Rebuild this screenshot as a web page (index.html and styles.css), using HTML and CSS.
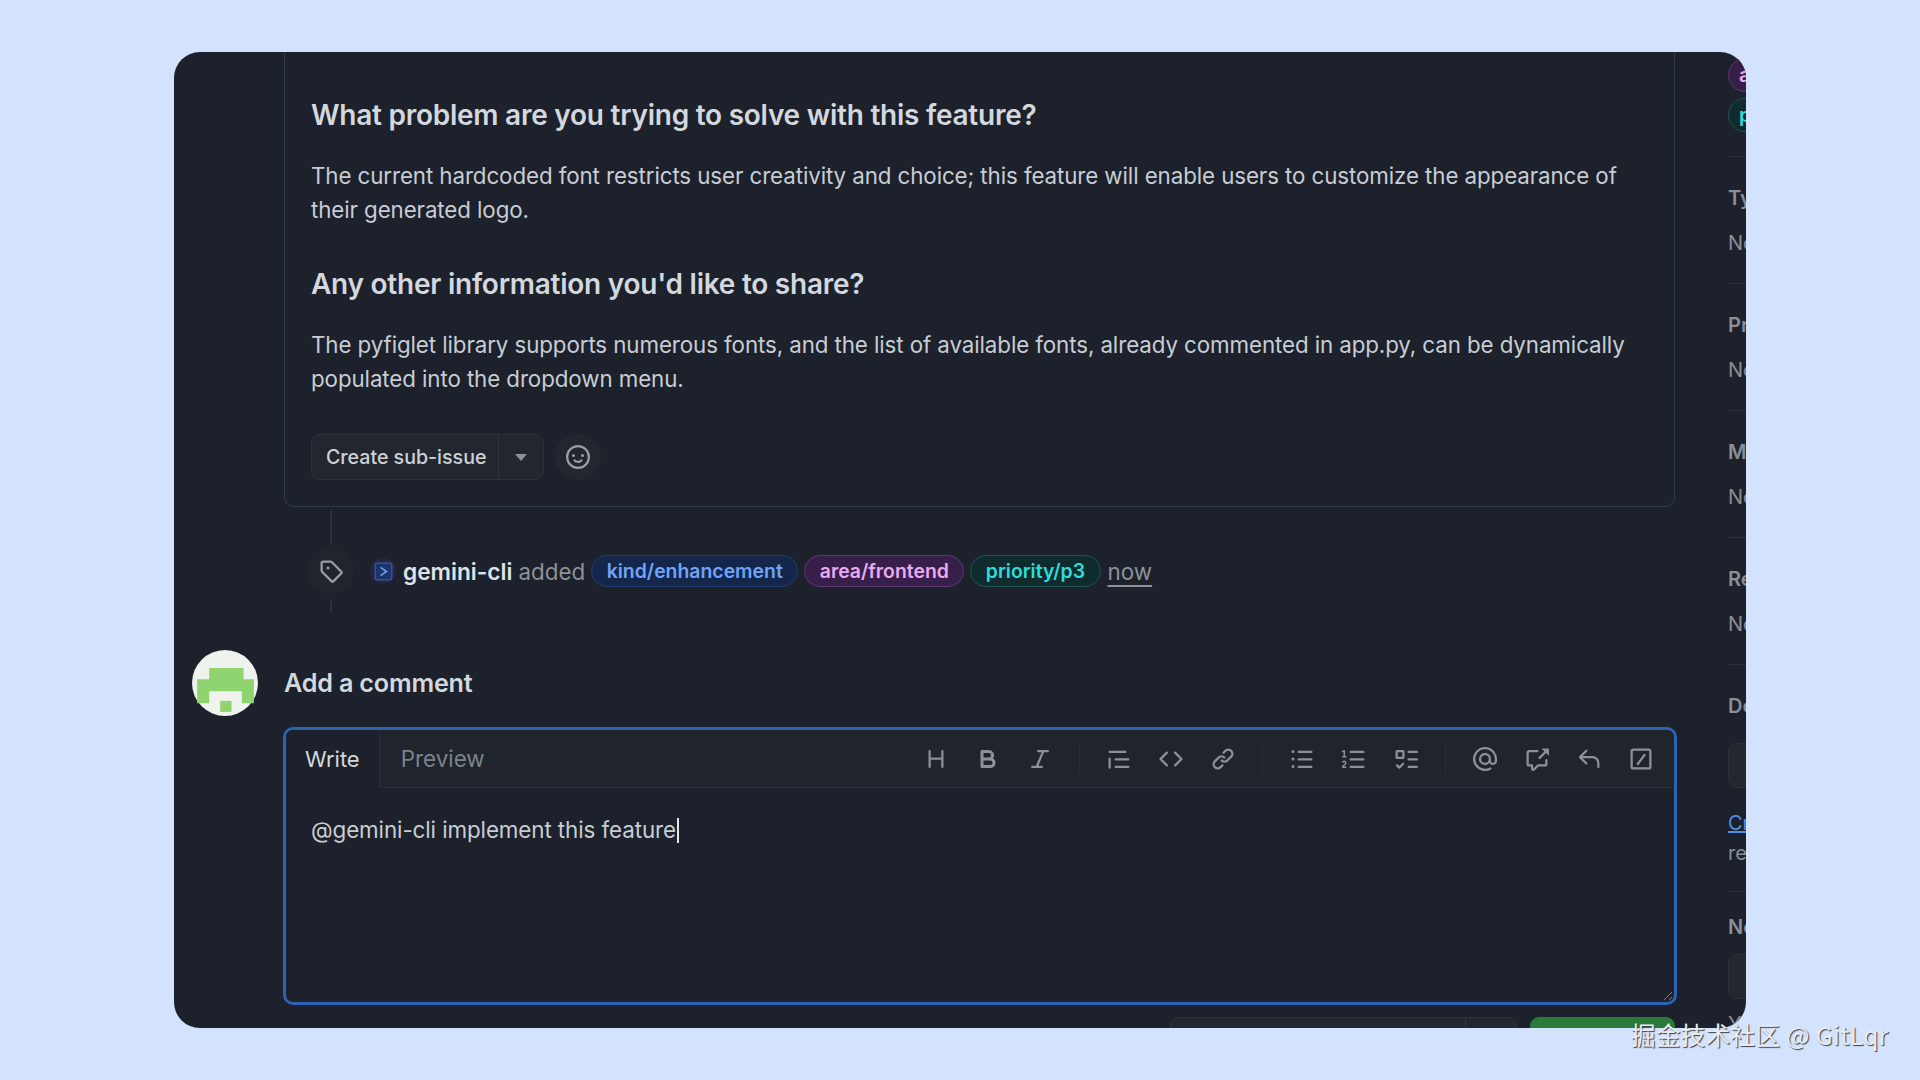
FILE: index.html
```html
<!DOCTYPE html>
<html lang="en">
<head>
<meta charset="utf-8">
<title>Add a comment</title>
<link rel="stylesheet" href="styles.css">
</head>
<body>
<div class="window">
  <main class="main">
    <section class="card">
      <h3 class="h first">What problem are you trying to solve with this feature?</h3>
      <p class="para">The current hardcoded font restricts user creativity and choice; this feature will enable users to customize the appearance of their generated logo.</p>
      <h3 class="h second">Any other information you'd like to share?</h3>
      <p class="para">The pyfiglet library supports numerous fonts, and the list of available fonts, already commented in app.py, can be dynamically populated into the dropdown menu.</p>
      <div class="actions">
        <div class="split">
          <span class="split-main">Create sub-issue</span>
          <span class="split-caret"><i class="caret"></i></span>
        </div>
        <span class="react">
          <svg class="ico" viewBox="0 0 16 16"><path d="M8 0a8 8 0 1 1 0 16A8 8 0 0 1 8 0ZM1.5 8a6.5 6.5 0 1 0 13 0 6.5 6.5 0 0 0-13 0Zm3.82 1.636a.75.75 0 0 1 1.038.175l.007.009c.103.118.22.222.35.31.264.178.683.37 1.285.37.602 0 1.02-.192 1.285-.371.13-.088.247-.192.35-.31l.007-.008a.75.75 0 0 1 1.222.87l-.022-.015c.02.013.021.015.021.015v.001l-.001.002-.002.003-.005.007-.014.019a2.066 2.066 0 0 1-.184.213c-.16.166-.338.316-.53.445-.63.418-1.37.638-2.127.629-.946 0-1.652-.308-2.126-.63a3.331 3.331 0 0 1-.715-.657l-.014-.02-.005-.006-.002-.003v-.002h-.001l.613-.432-.614.43a.75.75 0 0 1 .183-1.044ZM12 7a1 1 0 1 1-2 0 1 1 0 0 1 2 0ZM5 8a1 1 0 1 1 0-2 1 1 0 0 1 0 2Z"/></svg>
        </span>
      </div>
    </section>

    <div class="tl-line tl-top"></div>
    <div class="event">
      <span class="tag-ico">
        <svg class="ico" viewBox="0 0 16 16"><path d="M1 7.775V2.75C1 1.784 1.784 1 2.75 1h5.025c.464 0 .91.184 1.238.513l6.25 6.25a1.75 1.75 0 0 1 0 2.474l-5.026 5.026a1.75 1.75 0 0 1-2.474 0l-6.25-6.25A1.752 1.752 0 0 1 1 7.775Zm1.5 0c0 .066.026.13.073.177l6.25 6.25a.25.25 0 0 0 .354 0l5.025-5.025a.25.25 0 0 0 0-.354l-6.25-6.25a.25.25 0 0 0-.177-.073H2.75a.25.25 0 0 0-.25.25ZM6 5a1 1 0 1 1 0 2 1 1 0 0 1 0-2Z"/></svg>
      </span>
      <span class="bot"><svg class="bot-ico" viewBox="0 0 16 16"><rect x="1" y="1" width="14" height="14" rx="2" class="bot-bg"/><path d="M5.5 4.5 10.5 8l-5 3.5" class="bot-chev"/></svg></span>
      <strong class="who">gemini-cli</strong>
      <span class="muted">added</span>
      <span class="pill kind">kind/enhancement</span>
      <span class="pill area">area/frontend</span>
      <span class="pill prio">priority/p3</span>
      <span class="muted now">now</span>
    </div>
    <div class="tl-line tl-bottom"></div>

    <div class="comment-head">
      <span class="avatar">
        <svg class="avatar-art" viewBox="0 0 192 192"><path class="avatar-px" d="M50 52h100v33h30v70h-35v-35H50v35H15V85h35Z"/><rect class="avatar-px" x="82" y="148" width="33" height="32"/></svg>
      </span>
      <h2 class="add">Add a comment</h2>
    </div>

    <div class="editor">
      <div class="toolbar">
        <span class="tab active">Write</span>
        <span class="tab">Preview</span>
        <div class="tools">
          <svg class="tool" viewBox="0 0 16 16"><path d="M3.75 2a.75.75 0 0 1 .75.75V7h7V2.75a.75.75 0 0 1 1.5 0v10.5a.75.75 0 0 1-1.5 0V8.5h-7v4.75a.75.75 0 0 1-1.5 0V2.75A.75.75 0 0 1 3.75 2Z"/></svg>
          <svg class="tool" viewBox="0 0 16 16"><path d="M4 2h4.5a3.501 3.501 0 0 1 2.852 5.53A3.499 3.499 0 0 1 9.5 14H4a1 1 0 0 1-1-1V3a1 1 0 0 1 1-1Zm1 7v3h4.5a1.5 1.5 0 0 0 0-3Zm3.5-2a1.5 1.5 0 0 0 0-3H5v3Z"/></svg>
          <svg class="tool" viewBox="0 0 16 16"><path d="M6 2.75A.75.75 0 0 1 6.75 2h6.5a.75.75 0 0 1 0 1.5h-2.505l-3.858 9H9.25a.75.75 0 0 1 0 1.5h-6.5a.75.75 0 0 1 0-1.5h2.505l3.858-9H6.75A.75.75 0 0 1 6 2.75Z"/></svg>
          <i class="sep"></i>
          <svg class="tool" viewBox="0 0 16 16"><path d="M1.75 2.5h10.5a.75.75 0 0 1 0 1.5H1.75a.75.75 0 0 1 0-1.5Zm4 5h8.5a.75.75 0 0 1 0 1.5h-8.5a.75.75 0 0 1 0-1.5Zm0 5h8.5a.75.75 0 0 1 0 1.5h-8.5a.75.75 0 0 1 0-1.5ZM2.5 7.75v6a.75.75 0 0 1-1.5 0v-6a.75.75 0 0 1 1.5 0Z"/></svg>
          <svg class="tool" viewBox="0 0 16 16"><path d="m11.28 3.22 4.25 4.25a.75.75 0 0 1 0 1.06l-4.25 4.25a.749.749 0 0 1-1.275-.326.749.749 0 0 1 .215-.734L13.94 8l-3.72-3.72a.749.749 0 0 1 .326-1.275.749.749 0 0 1 .734.215Zm-6.56 0a.751.751 0 0 1 1.042.018.751.751 0 0 1 .018 1.042L2.06 8l3.72 3.72a.749.749 0 0 1-.326 1.275.749.749 0 0 1-.734-.215L.47 8.53a.75.75 0 0 1 0-1.06Z"/></svg>
          <svg class="tool" viewBox="0 0 16 16"><path d="m7.775 3.275 1.25-1.25a3.5 3.5 0 1 1 4.95 4.95l-2.5 2.5a3.5 3.5 0 0 1-4.95 0 .751.751 0 0 1 .018-1.042.751.751 0 0 1 1.042-.018 1.998 1.998 0 0 0 2.83 0l2.5-2.5a2.002 2.002 0 0 0-2.83-2.83l-1.25 1.25a.751.751 0 0 1-1.042-.018.751.751 0 0 1-.018-1.042Zm-4.69 9.64a1.998 1.998 0 0 0 2.83 0l1.25-1.25a.751.751 0 0 1 1.042.018.751.751 0 0 1 .018 1.042l-1.25 1.25a3.5 3.5 0 1 1-4.95-4.95l2.5-2.5a3.5 3.5 0 0 1 4.95 0 .751.751 0 0 1-.018 1.042.751.751 0 0 1-1.042.018 1.998 1.998 0 0 0-2.83 0l-2.5 2.5a1.998 1.998 0 0 0 0 2.83Z"/></svg>
          <i class="sep"></i>
          <svg class="tool" viewBox="0 0 16 16"><path d="M5.75 2.5h8.5a.75.75 0 0 1 0 1.5h-8.5a.75.75 0 0 1 0-1.5Zm0 5h8.5a.75.75 0 0 1 0 1.5h-8.5a.75.75 0 0 1 0-1.5Zm0 5h8.5a.75.75 0 0 1 0 1.5h-8.5a.75.75 0 0 1 0-1.5ZM2 14a1 1 0 1 1 0-2 1 1 0 0 1 0 2Zm1-6a1 1 0 1 1-2 0 1 1 0 0 1 2 0ZM2 4a1 1 0 1 1 0-2 1 1 0 0 1 0 2Z"/></svg>
          <svg class="tool" viewBox="0 0 16 16"><path d="M5 3.25a.75.75 0 0 1 .75-.75h8.5a.75.75 0 0 1 0 1.5h-8.5A.75.75 0 0 1 5 3.25Zm0 5a.75.75 0 0 1 .75-.75h8.5a.75.75 0 0 1 0 1.5h-8.5A.75.75 0 0 1 5 8.25Zm0 5a.75.75 0 0 1 .75-.75h8.5a.75.75 0 0 1 0 1.5h-8.5a.75.75 0 0 1-.75-.75ZM.924 10.32a.5.5 0 0 1-.851-.525l.001-.001.001-.002.002-.004.007-.011c.097-.144.215-.273.348-.384.228-.19.588-.392 1.068-.392.468 0 .858.181 1.126.484.259.294.377.673.377 1.038 0 .987-.686 1.495-1.156 1.845l-.047.035c-.303.225-.522.4-.654.597h1.357a.5.5 0 0 1 0 1H.5a.5.5 0 0 1-.5-.5c0-1.005.692-1.52 1.167-1.875l.035-.025c.531-.396.8-.625.8-1.078a.57.57 0 0 0-.128-.376C1.806 10.068 1.695 10 1.5 10a.658.658 0 0 0-.429.163.835.835 0 0 0-.144.153ZM2.003 2.5V6h.503a.5.5 0 0 1 0 1H.5a.5.5 0 0 1 0-1h.503V3.308l-.28.14a.5.5 0 0 1-.446-.895l1.003-.5a.5.5 0 0 1 .723.447Z"/></svg>
          <svg class="tool" viewBox="0 0 16 16"><path d="M2 2h4a1 1 0 0 1 1 1v4a1 1 0 0 1-1 1H2a1 1 0 0 1-1-1V3a1 1 0 0 1 1-1Zm4.655 8.595a.75.75 0 0 1 0 1.06L4.03 14.28a.75.75 0 0 1-1.06 0l-1.5-1.5a.749.749 0 0 1 .326-1.275.749.749 0 0 1 .734.215l.97.97 2.095-2.095a.75.75 0 0 1 1.06 0ZM9.75 2.5h5.5a.75.75 0 0 1 0 1.5h-5.5a.75.75 0 0 1 0-1.5Zm0 5h5.5a.75.75 0 0 1 0 1.5h-5.5a.75.75 0 0 1 0-1.5Zm0 5h5.5a.75.75 0 0 1 0 1.5h-5.5a.75.75 0 0 1 0-1.5Zm-7.25-9v3h3v-3Z"/></svg>
          <i class="sep"></i>
          <svg class="tool" viewBox="0 0 16 16"><path d="M4.75 2.37a6.501 6.501 0 0 0 6.5 11.26.75.75 0 0 1 .75 1.298A7.999 7.999 0 0 1 .989 4.148 8 8 0 0 1 16 7.75v1.5a2.75 2.75 0 0 1-5.072 1.475 3.999 3.999 0 0 1-6.65-4.19A4 4 0 0 1 12 8v1.25a1.25 1.25 0 0 0 2.5 0V7.867a6.5 6.5 0 0 0-9.75-5.496ZM10.5 8a2.5 2.5 0 1 0-5 0 2.5 2.5 0 0 0 5 0Z"/></svg>
          <svg class="tool" viewBox="0 0 16 16"><path d="M2.75 3.5a.25.25 0 0 0-.25.25v7.5c0 .138.112.25.25.25h2a.75.75 0 0 1 .75.75v2.19l2.72-2.72a.749.749 0 0 1 .53-.22h4.5a.25.25 0 0 0 .25-.25v-2.5a.75.75 0 0 1 1.5 0v2.5A1.75 1.75 0 0 1 13.25 13H9.06l-2.573 2.573A1.458 1.458 0 0 1 4 14.543V13H2.75A1.75 1.75 0 0 1 1 11.25v-7.5C1 2.784 1.784 2 2.75 2h5.5a.75.75 0 0 1 0 1.5ZM16 1.25v4.146a.25.25 0 0 1-.427.177L14.03 4.03l-3.75 3.75a.749.749 0 0 1-1.275-.326.749.749 0 0 1 .215-.734l3.75-3.75-1.543-1.543A.25.25 0 0 1 11.604 1h4.146a.25.25 0 0 1 .25.25Z"/></svg>
          <svg class="tool" viewBox="0 0 16 16"><path d="M6.78 1.97a.75.75 0 0 1 0 1.06L3.81 6h6.44A4.75 4.75 0 0 1 15 10.75v2.5a.75.75 0 0 1-1.5 0v-2.5a3.25 3.25 0 0 0-3.25-3.25H3.81l2.97 2.97a.749.749 0 0 1-.326 1.275.749.749 0 0 1-.734-.215L1.47 7.28a.75.75 0 0 1 0-1.06l4.25-4.25a.75.75 0 0 1 1.06 0Z"/></svg>
          <svg class="tool" viewBox="0 0 16 16"><path d="M2.75 1h10.5c.966 0 1.75.784 1.75 1.75v10.5A1.75 1.75 0 0 1 13.25 15H2.75A1.75 1.75 0 0 1 1 13.25V2.75C1 1.784 1.784 1 2.75 1Zm0 1.5a.25.25 0 0 0-.25.25v10.5c0 .138.112.25.25.25h10.5a.25.25 0 0 0 .25-.25V2.75a.25.25 0 0 0-.25-.25Zm8 2.2a.75.75 0 0 1 .2 1.05l-4.5 6a.75.75 0 0 1-1.2-.9l4.5-6a.75.75 0 0 1 1-.15Z"/></svg>
        </div>
      </div>
      <div class="input">@gemini-cli implement this feature<span class="cursor"></span></div>
      <svg class="grip" viewBox="0 0 10 10"><path d="M1 9 9 1M6 9l3-3"/></svg>
    </div>

    <div class="submit-row">
      <span class="btn-grey"><i class="btn-div"></i></span>
      <span class="btn-green"></span>
    </div>
  </main>

  <aside class="side">
    <div class="side-top">
      <span class="side-pill s-area">area/frontend</span>
      <span class="side-pill s-prio">priority/p3</span>
    </div>
    <div class="sec"><div class="label">Type</div><div class="val">No type</div></div>
    <div class="sec"><div class="label">Projects</div><div class="val">No projects</div></div>
    <div class="sec"><div class="label">Milestone</div><div class="val">No milestone</div></div>
    <div class="sec"><div class="label">Relationships</div><div class="val">None yet</div></div>
    <div class="sec dev">
      <div class="label">Development</div>
      <div class="side-box"></div>
      <div class="val link"><u>Create a branch</u></div>
      <div class="val rest">remotely</div>
    </div>
    <div class="sec notif">
      <div class="label">Notifications</div>
      <div class="side-box"></div>
      <div class="val last">You're not receiving</div>
    </div>
  </aside>
</div>
<div class="mark">掘金技术社区 @ GitLqr</div>
</body>
</html>
```

FILE: styles.css
```css
* { box-sizing: border-box; }
html, body { margin: 0; height: 100%; }
body {
  background: #d3e3fd;
  padding: 52px 0 0 174px;
  font-family: Inter, "Liberation Sans", sans-serif;
  overflow: hidden;
}
.window {
  width: 1572px;
  height: 976px;
  background: #1c212b;
  border-radius: 26px;
  overflow: hidden;
  display: flex;
}
.main { width: 1554px; flex: none; padding-left: 110px; }
.card {
  width: 1391px;
  height: 455px;
  border: 1px solid #2f3b4a;
  border-top: 0;
  border-radius: 0 0 10px 10px;
  padding: 0 26px;
}
.h {
  margin: 0;
  font-size: 28px;
  line-height: 34px;
  font-weight: 600;
  color: #d3d7de;
  letter-spacing: -0.25px;
}
.h.first { padding-top: 46px; }
.h.second { margin-top: 40px; }
.para {
  margin: 27px 0 0;
  font-size: 22.35px;
  line-height: 34px;
  color: #c8cdd4;
  letter-spacing: -0.1px;
}
.actions { display: flex; align-items: center; gap: 11px; margin-top: 38px; }
.split {
  display: flex;
  width: 233px;
  height: 46px;
  border: 1px solid #2c323b;
  border-radius: 9px;
  background: #22272f;
  color: #cdd2d9;
  font-size: 19.6px;
  font-weight: 500;
  align-items: stretch;
}
.split-main { flex: 1; display: flex; align-items: center; padding-left: 14px; border-right: 1px solid #2f353e; }
.split-caret { width: 44px; display: flex; align-items: center; justify-content: center; }
.caret { width: 0; height: 0; border: 6px solid transparent; border-top: 7px solid #8d9198; border-bottom: 0; }
.react {
  width: 46px; height: 46px; border-radius: 50%;
  background: #22272f;
  display: flex; align-items: center; justify-content: center;
}
.ico { width: 24px; height: 24px; fill: #9a9ea5; }
.tl-line { width: 2px; background: #2d323a; margin-left: 46px; }
.tl-top { height: 35px; margin-top: 3px; }
.tl-bottom { height: 12px; margin-top: 13px; }
.event {
  display: flex;
  align-items: center;
  height: 32px;
  margin-top: 10px;
  font-size: 22.4px;
  color: #8d9299;
}
.tag-ico { width: 46px; height: 46px; margin-left: 24px; flex: none; display: flex; align-items: center; justify-content: center; background: #1f242d; border-radius: 50%; }
.bot {
  width: 26px; height: 26px; border-radius: 50%;
  margin-left: 16px;
  flex: none;
  background: #2a2440;
  display: flex; align-items: center; justify-content: center;
}
.bot-ico { width: 19px; height: 19px; }
.bot-bg { fill: #1b3568; stroke: #2d5db5; stroke-width: 1; }
.bot-chev { fill: none; stroke: #6d9df0; stroke-width: 1.4; }
.who { margin-left: 7px; font-weight: 600; font-size: 22.7px; color: #dfe2e7; }
.muted { margin-left: 6px; }
.pill {
  height: 32px;
  border-radius: 16px;
  border: 1.5px solid;
  padding: 0 14.5px;
  display: flex; align-items: center;
  font-size: 19.4px;
  font-weight: 600;
  white-space: nowrap;
  margin-left: 6px;
}
.kind { background: #14274a; border-color: #1f3f70; color: #6ea4fa; }
.area { background: #371f49; border-color: #5b3a70; color: #e9a9f3; }
.prio { background: #0f2b2e; border-color: #1f5551; color: #2ddcdc; }
.now { text-decoration: underline; text-underline-offset: 5px; margin-left: 7px; }
.comment-head { display: flex; align-items: center; height: 66px; margin: 38px 0 0 -92px; gap: 26px; }
.avatar {
  width: 66px; height: 66px; border-radius: 50%;
  background: #f0f2ee;
  flex: none;
  display: block;
}
.avatar-art { display: block; width: 66px; height: 66px; }
.avatar-px { fill: #8fd46f; }
.add { margin: 0; font-size: 25.2px; font-weight: 600; color: #d3d7de; letter-spacing: -0.2px; }
.editor {
  position: relative;
  width: 1394px;
  height: 278px;
  margin: 11px 0 0 -1px;
  border: 3px solid #2e62b4;
  border-radius: 10px;
  overflow: hidden;
}
.toolbar {
  display: flex;
  align-items: stretch;
  height: 58px;
  background: #20252d;
  border-bottom: 1px solid #2a2f38;
}
.tab { font-size: 22.4px; color: #7d828a; display: flex; align-items: center; padding: 0 21px; }
.tab.active { background: #1c212b; color: #d3d7de; border-right: 1px solid #2a2f38; height: 58px; padding: 0 19px; font-size: 22px; }
.tools { margin-left: auto; padding-right: 21px; display: flex; align-items: center; gap: 28px; }
.tool { width: 24px; height: 24px; fill: #8c9097; flex: none; }
.sep { width: 1px; height: 30px; background: #2a2f37; margin: 0 -1px; }
.input { padding: 25px 25px; font-size: 22.4px; line-height: 34px; color: #c8cdd4; letter-spacing: -0.1px; display: flex; align-items: center; }
.cursor { width: 2px; height: 25px; background: #e4e6ea; margin-left: 1px; }
.grip { position: absolute; right: 1px; bottom: 1px; width: 10px; height: 10px; fill: none; stroke: #7d828a; stroke-width: 1; }
.submit-row { display: flex; justify-content: flex-end; gap: 13px; width: 1391px; margin-top: 12px; }
.btn-grey { position: relative; width: 347px; height: 48px; background: #23282f; border: 1px solid #2e333b; border-radius: 9px; display: block; }
.btn-div { position: absolute; right: 50px; top: 0; bottom: 0; width: 1px; background: #353a42; }
.btn-green { width: 145px; height: 48px; background: #2b7a39; border-radius: 9px; display: block; }
.side { flex: none; width: 240px; color: #8b8f96; font-size: 20px; white-space: nowrap; }
.side-top { height: 104px; padding-top: 6px; display: flex; flex-direction: column; gap: 5px; }
.side-pill { height: 34px; width: 160px; border-radius: 17px; border: 1.5px solid; padding-left: 10px; font-weight: 600; display: flex; align-items: center; }
.s-area { background: #371f49; border-color: #5b3a70; color: #e9a9f3; }
.s-prio { background: #0f2b2e; border-color: #1f5551; color: #2ddcdc; margin-top: 1px; }
.sec { border-top: 1px solid #2c323b; height: 127px; padding-top: 27px; }
.label { font-weight: 600; line-height: 28px; }
.val { line-height: 28px; margin-top: 17px; }
.sec.dev { height: 227px; }
.side-box { height: 45px; width: 200px; margin-top: 23px; border: 1px solid #2c323b; background: #23282f; border-radius: 9px; }
.val.link { color: #4f8fe8; margin-top: 21px; }
.val.rest { margin-top: 2px; }
.sec.notif { height: 200px; padding-top: 21px; }
.notif .side-box { margin-top: 13px; }
.val.last { margin-top: 11px; }
.mark {
  position: absolute;
  left: 1631px;
  top: 1017px;
  font-family: "Noto Sans CJK SC", "Noto Sans", sans-serif;
  font-size: 24.5px;
  letter-spacing: 0.4px;
  line-height: 36px;
  color: #e9edf3;
  text-shadow: 1px 1px 1px #3a3d44;
  white-space: nowrap;
}
```
